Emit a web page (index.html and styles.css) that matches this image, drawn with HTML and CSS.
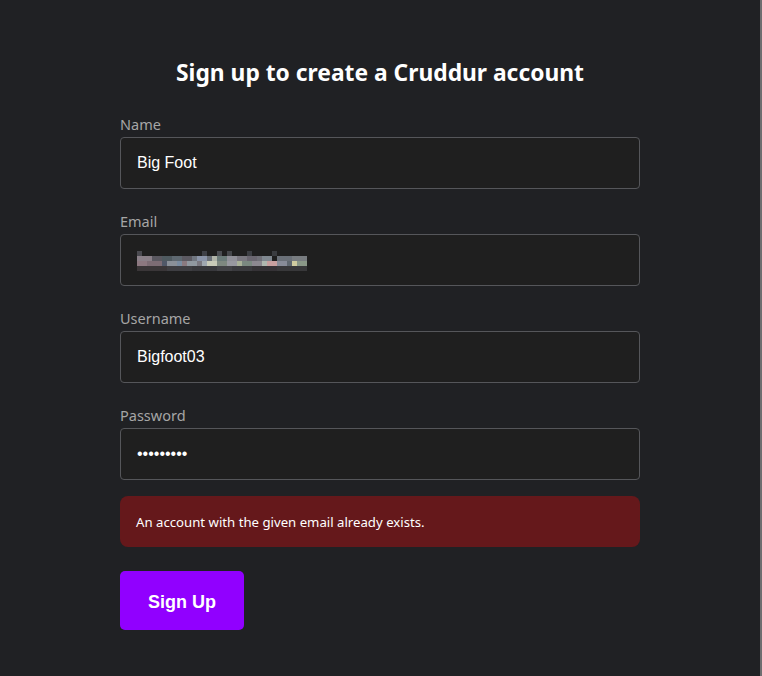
FILE: index.html
```html
<!DOCTYPE html>
<html>
<head>
<meta charset="utf-8">
<link rel="stylesheet" href="styles.css">
</head>
<body>
<div class="page">
  <main class="form">
    <h1 class="title">Sign up to create a Cruddur account</h1>
    <div class="field">
      <label class="label">Name</label>
      <input class="input" type="text" value="Big Foot">
    </div>
    <div class="field">
      <label class="label">Email</label>
      <div class="input input-blur">
        <svg class="blur" width="170" height="20" viewBox="0 0 34 4" preserveAspectRatio="none" shape-rendering="crispEdges">
          <g>
            <rect x="0" y="0" width="1" height="1" fill="#4a4a50"/>
            <rect x="13" y="0" width="1" height="1" fill="#3e4046"/>
            <rect x="16" y="0" width="1" height="1" fill="#4b4d52"/>
            <rect x="18" y="0" width="1" height="1" fill="#45474b"/>
            <rect x="22" y="0" width="1" height="1" fill="#3c3e43"/>
            <rect x="27" y="0" width="1" height="1" fill="#3a3c40"/>
          </g>
          <g>
            <rect x="0" y="1" width="3" height="1" fill="#8a8088"/>
            <rect x="3" y="1" width="2" height="1" fill="#5a5860"/>
            <rect x="5" y="1" width="2" height="1" fill="#4f5a60"/>
            <rect x="7" y="1" width="2" height="1" fill="#5e6870"/>
            <rect x="9" y="1" width="2" height="1" fill="#5c5a62"/>
            <rect x="11" y="1" width="1" height="1" fill="#707680"/>
            <rect x="12" y="1" width="2" height="1" fill="#8a94a8"/>
            <rect x="14" y="1" width="1" height="1" fill="#6a7078"/>
            <rect x="15" y="1" width="1" height="1" fill="#b0b4a8"/>
            <rect x="16" y="1" width="2" height="1" fill="#6a7a78"/>
            <rect x="18" y="1" width="2" height="1" fill="#909098"/>
            <rect x="20" y="1" width="2" height="1" fill="#7a7880"/>
            <rect x="22" y="1" width="2" height="1" fill="#6a6670"/>
            <rect x="24" y="1" width="1" height="1" fill="#707078"/>
            <rect x="25" y="1" width="2" height="1" fill="#808890"/>
            <rect x="28" y="1" width="3" height="1" fill="#6a7078"/>
            <rect x="31" y="1" width="3" height="1" fill="#787c80"/>
          </g>
          <g>
            <rect x="0" y="2" width="2" height="1" fill="#8c7880"/>
            <rect x="2" y="2" width="3" height="1" fill="#7c6c74"/>
            <rect x="5" y="2" width="1" height="1" fill="#505868"/>
            <rect x="6" y="2" width="2" height="1" fill="#8a9098"/>
            <rect x="8" y="2" width="1" height="1" fill="#7a8ca0"/>
            <rect x="9" y="2" width="1" height="1" fill="#8a7a80"/>
            <rect x="10" y="2" width="2" height="1" fill="#9098a0"/>
            <rect x="12" y="2" width="1" height="1" fill="#7a7880"/>
            <rect x="13" y="2" width="1" height="1" fill="#a0a8b0"/>
            <rect x="14" y="2" width="2" height="1" fill="#c8cab8"/>
            <rect x="16" y="2" width="2" height="1" fill="#7e8880"/>
            <rect x="18" y="2" width="2" height="1" fill="#9898a0"/>
            <rect x="20" y="2" width="1" height="1" fill="#a8b098"/>
            <rect x="21" y="2" width="2" height="1" fill="#7a8880"/>
            <rect x="23" y="2" width="2" height="1" fill="#8c8890"/>
            <rect x="25" y="2" width="1" height="1" fill="#b0b8b0"/>
            <rect x="26" y="2" width="2" height="1" fill="#c8a0a0"/>
            <rect x="28" y="2" width="2" height="1" fill="#888c98"/>
            <rect x="30" y="2" width="1" height="1" fill="#606870"/>
            <rect x="31" y="2" width="1" height="1" fill="#d0cca0"/>
            <rect x="32" y="2" width="2" height="1" fill="#8a9888"/>
          </g>
          <g>
            <rect x="0" y="3" width="6" height="1" fill="#3a3638"/>
            <rect x="6" y="3" width="5" height="1" fill="#3e3e42"/>
            <rect x="11" y="3" width="5" height="1" fill="#38383c"/>
            <rect x="16" y="3" width="3" height="1" fill="#424246"/>
            <rect x="19" y="3" width="4" height="1" fill="#3a3a3e"/>
            <rect x="23" y="3" width="5" height="1" fill="#353236"/>
            <rect x="28" y="3" width="6" height="1" fill="#38383a"/>
          </g>
        </svg>
      </div>
    </div>
    <div class="field">
      <label class="label">Username</label>
      <input class="input" type="text" value="Bigfoot03">
    </div>
    <div class="field">
      <label class="label">Password</label>
      <input class="input" type="password" value="123456789">
    </div>
    <div class="error">An account with the given email already exists.</div>
    <button class="submit" type="button">Sign Up</button>
  </main>
  <div class="edge"></div>
</div>
</body>
</html>
```

FILE: styles.css
```css
html, body {
  margin: 0;
  padding: 0;
  height: 100%;
  background: #202124;
}
.page {
  display: flex;
  min-height: 676px;
}
.form {
  width: 520px;
  margin-left: 120px;
  padding-top: 57px;
  display: flex;
  flex-direction: column;
  align-items: flex-start;
  flex: none;
}
.title {
  align-self: stretch;
  margin: 0 0 25px;
  text-align: center;
  font-family: "Noto Sans", "Open Sans", sans-serif;
  font-weight: 700;
  font-size: 22.8px;
  line-height: 32px;
  color: #ffffff;
}
.field {
  align-self: stretch;
  display: flex;
  flex-direction: column;
  margin-bottom: 22px;
}
.label {
  font-family: "Noto Sans", "Open Sans", sans-serif;
  font-size: 14.5px;
  line-height: 20px;
  color: #a6a6a6;
  margin-bottom: 3px;
}
.input {
  box-sizing: border-box;
  height: 52px;
  width: 100%;
  margin: 0;
  padding: 0 16px;
  background: #1f1f1f;
  border: 1px solid #55565a;
  border-radius: 4px;
  color: #ffffff;
  font-family: "Liberation Sans", Arial, sans-serif;
  font-size: 16px;
  outline: none;
}
.input-blur {
  display: flex;
  align-items: center;
}
.blur {
  display: block;
  margin-top: 2px;
}
.error {
  align-self: stretch;
  box-sizing: border-box;
  height: 51px;
  margin-top: -6px;
  padding: 0 16px;
  display: flex;
  align-items: center;
  background: #65181b;
  border-radius: 8px;
  color: #ffffff;
  font-family: "Noto Sans", "Open Sans", sans-serif;
  font-size: 13.2px;
}
.submit {
  margin-top: 24px;
  width: 124px;
  height: 59px;
  border: 0;
  border-radius: 5px;
  background: #9100ff;
  color: #ffffff;
  font-family: "Liberation Sans", Arial, sans-serif;
  font-weight: 700;
  font-size: 18px;
  padding: 3px 0 0;
}
.edge {
  margin-left: auto;
  width: 2px;
  background: #6e6e70;
}
```
